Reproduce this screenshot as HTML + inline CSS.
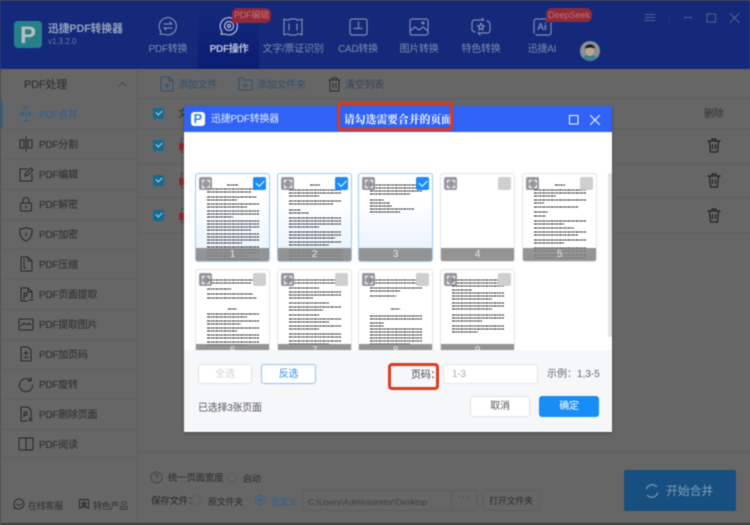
<!DOCTYPE html>
<html lang="zh"><head><meta charset="utf-8"><title>迅捷PDF转换器</title>
<style>
html,body{margin:0;padding:0}
body{width:750px;height:525px;overflow:hidden;background:#666;position:relative;font-family:"Liberation Sans","Noto Sans CJK SC",sans-serif;font-size:10px;color:#2c2c2c;letter-spacing:-.25px}
div,span,svg{position:absolute;box-sizing:border-box;white-space:nowrap}
#w{left:0;top:0;width:750px;height:525px;filter:blur(.45px);overflow:hidden;background:#666}
svg{fill:none;stroke-linecap:round;stroke-linejoin:round}
.tab{top:42px;width:70px;text-align:center;color:#7d8ab0;font-size:10px;line-height:14px;margin-top:.5px}
.ti{stroke:#7d8ab0;stroke-width:1.2}
.side{left:39px;line-height:14px;color:#2b2b2b;margin-top:1.5px}
.si{left:18px;width:16px;height:16px;stroke:#262626;stroke-width:1}
.ln{background:#5f5f5f;height:1px}
.tool{top:77px;line-height:14px;color:#33506e;margin-top:1.5px}
.cb{left:153px;width:11px;height:11px;background:#156c92;border-radius:2px}
.cb:after{content:"";position:absolute;left:3px;top:2px;width:5px;height:3px;border-left:1.2px solid #c5d5dd;border-bottom:1.2px solid #c5d5dd;transform:rotate(-45deg)}
.thumb{width:75px;height:89px;background:#fff;border:1px solid #e4e4e4;border-radius:3px;overflow:hidden}
.sel{border-color:#9cc9f2;background:linear-gradient(#fff 30%,#e6f1ff)}
.bar{left:0;right:0;bottom:0;height:13px;background:rgba(133,133,133,.88);color:#e8e8e8;text-align:center;font-size:10px;line-height:13px}
.ex{left:3px;top:3px;width:13px;height:13px;background:rgba(125,128,135,.8);border-radius:2px}
.ex:after{content:"";position:absolute;left:2.500px;top:2.500px;width:8px;height:8px;background:linear-gradient(#fff,#fff) 0 0/3px 1px no-repeat,linear-gradient(#fff,#fff) 0 0/1px 3px no-repeat,linear-gradient(#fff,#fff) 100% 0/3px 1px no-repeat,linear-gradient(#fff,#fff) 100% 0/1px 3px no-repeat,linear-gradient(#fff,#fff) 0 100%/3px 1px no-repeat,linear-gradient(#fff,#fff) 0 100%/1px 3px no-repeat,linear-gradient(#fff,#fff) 100% 100%/3px 1px no-repeat,linear-gradient(#fff,#fff) 100% 100%/1px 3px no-repeat}
.ck{right:3px;top:3px;width:13px;height:13px;border-radius:2px;background:#cfcfcf}
.on{background:#1a8cf5}
.on:after{content:"";position:absolute;left:3px;top:3px;width:7px;height:3.5px;border-left:1.5px solid #fff;border-bottom:1.5px solid #fff;transform:rotate(-45deg)}
.tx{stroke:#222;stroke-width:.95;stroke-dasharray:3 .6 1.5 .5 2 .7;stroke-linecap:butt;left:0;top:0;width:73px;height:87px}
.btn{border-radius:3px;text-align:center;font-size:10px;background:#fff}
.pdf{left:181px;width:4px;height:15px;border:1px solid #4c4c4c;border-right:0}
.rd{left:179px;width:5px;height:7px;background:#8c2a2a}
</style></head><body><div id="w">

<!-- Header -->
<div style="left:0;top:0;width:750px;height:69px;background:#14297a;border-top:1px solid #303a58"></div>
<div style="left:198px;top:7px;width:61px;height:62px;background:linear-gradient(#14297a,#0a1c74)"></div>
<div style="left:14px;top:21px;width:28px;height:27px;background:#26808a;border-radius:4px"></div>
<div style="left:20px;top:25px;font:bold 24px/22px 'Liberation Sans',sans-serif;color:#b4c0c2">P</div>
<div style="left:48px;top:22px;font-weight:bold;font-size:10.800px;line-height:15px;color:#98a2bf;letter-spacing:-.1px">迅捷PDF转换器</div>
<div style="left:48px;top:37px;font-size:8px;line-height:10px;color:#6e7ca6;letter-spacing:0">v1.3.2.0</div>

<svg class="ti" style="left:158px;top:16px;width:20px;height:20px" viewBox="0 0 20 20"><path d="M2 18c1-1 1-2 .6-3A8.600 8.600 0 1 1 6 18c-1 .4-2.500.4-4 0zM6 8h8l-2-2M14 12H6l2 2"/></svg>
<svg class="ti" style="left:219px;top:16px;width:20px;height:20px;stroke:#b4bcd6" viewBox="0 0 20 20"><path d="M2 18c1-1 1-2 .6-3A8.600 8.600 0 1 1 6 18c-1 .4-2.500.4-4 0z"/><circle cx="10" cy="10" r="4.500"/><circle cx="10" cy="10" r="1.500"/></svg>
<svg class="ti" style="left:283px;top:18px;width:20px;height:18px" viewBox="0 0 20 18"><path d="M1 1c3 1.500 5 1.500 6 0h6c1 1.500 3 1.500 6 0v16c-3-1.500-5-1.500-6 0H7c-1-1.500-3-1.500-6 0zM6 6v6M14 6v6"/></svg>
<svg class="ti" style="left:349px;top:18px;width:19px;height:18px" viewBox="0 0 19 18"><rect x="1" y="1" width="17" height="16" rx="2"/><path d="M9.500 4v6.500M5 10.500h8"/></svg>
<svg class="ti" style="left:409px;top:18px;width:20px;height:18px" viewBox="0 0 20 18"><rect x="1" y="1" width="18" height="16" rx="2"/><path d="M1 13l5-4 4 3 4-3 5 4"/><circle cx="14" cy="5" r="1"/></svg>
<svg class="ti" style="left:471px;top:17px;width:20px;height:19px" viewBox="0 0 20 19"><path d="M4 15c-2-.4-3-1.500-3-3V6c0-2 1-3 3-3h9l-2-2M16 4c2 .4 3 1.500 3 3v6c0 2-1 3-3 3H7l2 2M10 6l1 2.500 2.500.3-2 1.600.6 2.600-2.100-1.400-2.100 1.400.6-2.600-2-1.600 2.500-.3z"/></svg>
<svg class="ti" style="left:533px;top:18px;width:19px;height:18px" viewBox="0 0 19 18"><path d="M1 15V3c0-1 1-2 2-2h13M18 5v10c0 1-1 2-2 2H3"/></svg>
<div style="left:537px;top:22px;font-weight:bold;font-size:10px;line-height:12px;color:#7d8ab0">Ai</div>

<div class="tab" style="left:133px">PDF转换</div>
<div class="tab" style="left:194px;color:#bcc3da;font-weight:bold">PDF操作</div>
<div class="tab" style="left:258px">文字/票证识别</div>
<div class="tab" style="left:323px">CAD转换</div>
<div class="tab" style="left:384px">图片转换</div>
<div class="tab" style="left:446px">特色转换</div>
<div class="tab" style="left:507px">迅捷AI</div>

<div style="left:232px;top:8px;width:39px;height:15px;background:#8f2a38;border-radius:6px 6px 6px 0;color:#c4707a;font-size:9px;line-height:15px;text-align:center">PDF编辑</div>
<div style="left:546px;top:8px;width:46px;height:14px;background:#8f2a38;border-radius:6px 6px 6px 0;color:#c4707a;font-size:9px;line-height:14px;text-align:center;letter-spacing:0">DeepSeek</div>

<svg style="left:580px;top:41px;width:20px;height:20px" viewBox="0 0 20 20"><circle cx="10" cy="10" r="10" fill="#8a8f92"/><path d="M3 17c2-3 4-3.500 7-3.500s5 .5 7 3.500a10 10 0 0 1-14 0z" fill="#3f7f96" stroke="none"/><ellipse cx="10" cy="9.500" rx="4.500" ry="5.500" fill="#b8a690" stroke="none"/><path d="M5 8c0-6 10-6 10 0-2-2-8-2-10 0z" fill="#15181c" stroke="none"/></svg>

<svg style="left:644px;top:13px;width:96px;height:10px;stroke:#54648f;stroke-width:1" viewBox="0 0 96 10"><path d="M1 1.500h10M1 4.500h10M1 7.500h10"/><path d="M25 1v8" stroke="#22347f"/><path d="M40 4.500h8" /><rect x="63" y="1" width="8.500" height="8"/><path d="M86 .5l9 9M95 .5l-9 9"/></svg>

<!-- Main backgrounds -->
<div style="left:137px;top:69px;width:1px;height:456px;background:#5e5e5e"></div>
<div class="ln" style="left:138px;top:98px;width:612px"></div>
<div class="ln" style="left:138px;top:128px;width:612px"></div>
<div class="ln" style="left:138px;top:163px;width:612px"></div>
<div class="ln" style="left:138px;top:197px;width:612px"></div>
<div class="ln" style="left:138px;top:232px;width:612px"></div>
<div class="ln" style="left:138px;top:452px;width:612px"></div>
<div style="left:0;top:523px;width:750px;height:2px;background:#3a3a3a"></div>
<div style="left:0;top:69px;width:1px;height:456px;background:#4a4a4a"></div>

<!-- Sidebar -->
<div class="side" style="left:24px;top:76px;font-size:11px;letter-spacing:-.2px">PDF处理</div>
<svg style="left:118px;top:81px;width:9px;height:6px;stroke:#484848;stroke-width:1" viewBox="0 0 9 6"><path d="M1 5l3.500-3.500L8 5"/></svg>
<div style="left:1px;top:100px;width:2px;height:28px;background:#2f6290"></div>

<div class="ln" style="left:3px;top:129px;width:134px"></div><div class="ln" style="left:3px;top:159px;width:134px"></div><div class="ln" style="left:3px;top:189px;width:134px"></div><div class="ln" style="left:3px;top:219px;width:134px"></div><div class="ln" style="left:3px;top:249px;width:134px"></div><div class="ln" style="left:3px;top:279px;width:134px"></div><div class="ln" style="left:3px;top:309px;width:134px"></div><div class="ln" style="left:3px;top:339px;width:134px"></div><div class="ln" style="left:3px;top:369px;width:134px"></div><div class="ln" style="left:3px;top:399px;width:134px"></div><div class="ln" style="left:3px;top:429px;width:134px"></div><div class="ln" style="left:3px;top:457px;width:134px"></div>

<div class="side" style="top:107px;color:#2f5f8e">PDF合并</div>
<div class="side" style="top:137px">PDF分割</div>
<div class="side" style="top:167px">PDF编辑</div>
<div class="side" style="top:197px">PDF解密</div>
<div class="side" style="top:227px">PDF加密</div>
<div class="side" style="top:257px">PDF压缩</div>
<div class="side" style="top:287px">PDF页面提取</div>
<div class="side" style="top:317px">PDF提取图片</div>
<div class="side" style="top:347px">PDF加页码</div>
<div class="side" style="top:377px">PDF旋转</div>
<div class="side" style="top:407px">PDF删除页面</div>
<div class="side" style="top:437px">PDF阅读</div>

<svg class="si" style="top:106px;stroke:#2f5f8e" viewBox="0 0 16 16"><path d="M5 1h6M5 15h6M8 1v14M1 8h5M15 8h-5M4 6l2 2-2 2M12 6l-2 2 2 2"/></svg>
<svg class="si" style="top:136px" viewBox="0 0 16 16"><rect x="2" y="4" width="4" height="8"/><rect x="10" y="4" width="4" height="8"/><path d="M8 1v14"/></svg>
<svg class="si" style="top:166px" viewBox="0 0 16 16"><path d="M9 3H2v12h12V8M7 10l.5-2.500L13 2l2 2-5.500 5.500z"/></svg>
<svg class="si" style="top:196px" viewBox="0 0 16 16"><rect x="2.500" y="7" width="11" height="8" rx="1.500"/><path d="M5 7V4.500a3 3 0 0 1 6 0V7M8 10v2"/></svg>
<svg class="si" style="top:226px" viewBox="0 0 16 16"><path d="M2 3c3 0 4-1 6-1.500C10 2 11 3 14 3c.5 6-1 10-6 12C3 13 1.500 9 2 3zM8 7v3"/></svg>
<svg class="si" style="top:256px" viewBox="0 0 16 16"><path d="M3 1h7l4 4v10H3zM10 1v4h4M6 3v2M6 6v2M6 9v2M6 12h2"/></svg>
<svg class="si" style="top:286px" viewBox="0 0 16 16"><path d="M9 15H3V2h7l4 4v6M10 2v4h4M6 7h3v3H6zM6 7v6M11 14h4"/></svg>
<svg class="si" style="top:316px" viewBox="0 0 16 16"><rect x="1" y="3" width="14" height="11" rx="1"/><path d="M3 10l3-3 3 2 2-2 2 2"/></svg>
<svg class="si" style="top:346px" viewBox="0 0 16 16"><path d="M3 1h7l3 3v11H3zM8 5v4M6 7h4M6 11.500h4"/></svg>
<svg class="si" style="top:376px" viewBox="0 0 16 16"><path d="M13 5a6.500 6.500 0 1 0 1.500 4M13 1.500V5H9.500"/></svg>
<svg class="si" style="top:406px" viewBox="0 0 16 16"><path d="M9 15H3V1h7l3 3v7M6 6h3v3H6zM6 6v5M11 12l3 3M14 12l-3 3"/></svg>
<svg class="si" style="top:436px" viewBox="0 0 16 16"><path d="M1 2h6c.6 0 1 .4 1 1v11H2c-.6 0-1-.4-1-1zM15 2H9c-.6 0-1 .4-1 1v11h6c.6 0 1-.4 1-1z"/></svg>

<svg class="si" style="left:13px;top:498px;width:12px;height:12px;stroke-width:1.300" viewBox="0 0 16 16"><path d="M8 1.500a6.500 6.500 0 1 1-4 11.600L1.500 14l.8-2.500A6.500 6.500 0 0 1 8 1.500zM5 8c1 2.500 5 2.500 6 0"/></svg>
<div class="side" style="left:28px;top:497px;font-size:9px;color:#303030">在线客服</div>
<svg class="si" style="left:78px;top:498px;width:12px;height:12px;stroke-width:1.300" viewBox="0 0 16 16"><path d="M2 2h12v12l-3-2H5l-3 2zM8 5l1 2h2l-1.500 1.500.5 2-2-1-2 1 .5-2L5 7h2z"/></svg>
<div class="side" style="left:93px;top:497px;font-size:9px;color:#303030">特色产品</div>

<!-- Toolbar -->
<svg style="left:160px;top:76px;width:14px;height:16px;stroke:#33506e;stroke-width:1" viewBox="0 0 14 16"><path d="M1 1h8l4 4v10H1zM9 1v4h4M7 7v5M4.500 9.500h5"/></svg>
<div class="tool" style="left:178px">添加文件</div>
<svg style="left:238px;top:77px;width:15px;height:14px;stroke:#33506e;stroke-width:1" viewBox="0 0 15 14"><path d="M1 1h4l1 2h8v10H1zM7.500 6v5M5 8.500h5"/></svg>
<div class="tool" style="left:257px">添加文件夹</div>
<svg style="left:328px;top:77px;width:13px;height:15px;stroke:#2a2a2a;stroke-width:1" viewBox="0 0 13 15"><path d="M1 3h11M4 3V1h5v2M2 3v11h9V3M5 6v5M8 6v5"/></svg>
<div class="tool" style="left:345px;color:#30445a">清空列表</div>

<!-- Table -->
<div class="cb" style="top:108px"></div><div class="cb" style="top:140px"></div><div class="cb" style="top:175px"></div><div class="cb" style="top:210px"></div>
<div style="left:178px;top:108px;line-height:14px">文</div>
<div class="pdf" style="top:138px"></div><div class="rd" style="top:143px"></div>
<div class="pdf" style="top:173px"></div><div class="rd" style="top:178px"></div>
<div class="pdf" style="top:208px"></div><div class="rd" style="top:213px"></div>
<div style="left:704px;top:108px;line-height:14px;color:#333">删除</div>
<svg style="left:707px;top:138px;width:14px;height:15px;stroke:#222;stroke-width:1.200" viewBox="0 0 14 15"><path d="M1 3h12M5 3V1h4v2M2.500 3l1 11h7l1-11M5.500 6.500v4M8.500 6.500v4"/></svg>
<svg style="left:707px;top:173px;width:14px;height:15px;stroke:#222;stroke-width:1.200" viewBox="0 0 14 15"><path d="M1 3h12M5 3V1h4v2M2.500 3l1 11h7l1-11M5.500 6.500v4M8.500 6.500v4"/></svg>
<svg style="left:707px;top:208px;width:14px;height:15px;stroke:#222;stroke-width:1.200" viewBox="0 0 14 15"><path d="M1 3h12M5 3V1h4v2M2.500 3l1 11h7l1-11M5.500 6.500v4M8.500 6.500v4"/></svg>

<!-- Bottom -->
<svg style="left:150px;top:471px;width:13px;height:13px;stroke:#444;stroke-width:.9" viewBox="0 0 13 13"><circle cx="6.500" cy="6.500" r="5.500"/><path d="M5 5c0-2 3-2 3 0 0 1-1.500 1-1.500 2.500M6.500 9.500v.3"/></svg>
<div style="left:168px;top:472px;line-height:14px;font-size:9.500px;color:#2c2c2c">统一页面宽度</div>
<div style="left:227px;top:473px;width:10px;height:10px;border:1px solid #5c5c5c;border-radius:50%"></div>
<div style="left:243px;top:472px;line-height:14px;font-size:9px;color:#2c2c2c">启动</div>
<div style="left:151px;top:494.500px;line-height:14px;font-size:9.500px;color:#262626">保存文件&#xFF1A;</div>
<div style="left:191px;top:495px;width:10px;height:10px;border:1px solid #5c5c5c;border-radius:50%"></div>
<div style="left:208px;top:494.500px;line-height:14px;font-size:9px;color:#2c2c2c">原文件夹</div>
<div style="left:255px;top:495px;width:10px;height:10px;border:1px solid #2f6290;border-radius:50%"></div>
<div style="left:258px;top:498px;width:4px;height:4px;background:#2f6290;border-radius:50%"></div>
<div style="left:271px;top:494.500px;line-height:14px;font-size:9px;color:#2f5f8e">自定义</div>
<div style="left:302px;top:490px;width:176px;height:21px;border:1px solid #5f5f5f;border-radius:2px"></div>
<div style="left:451px;top:490px;width:1px;height:21px;background:#5a5a5a"></div>
<div style="left:308px;top:494.500px;line-height:14px;font-size:8.500px;color:#3f3f3f;letter-spacing:0">C:\Users\Administrator\Desktop</div>
<div style="left:458px;top:491px;line-height:14px;color:#3c3c3c;letter-spacing:.6px">···</div>
<div style="left:482px;top:490px;width:58px;height:21px;border:1px solid #5f5f5f;border-radius:3px;text-align:center;line-height:20px;font-size:9px;color:#2c2c2c">打开文件夹</div>
<div style="left:624px;top:470px;width:112px;height:41px;background:#174f80;border-radius:2px"></div>
<svg style="left:645px;top:484px;width:14px;height:14px;stroke:#7f9db8;stroke-width:1.200" viewBox="0 0 14 14"><path d="M11.500 2.500A6 6 0 0 0 1.500 5M2.500 11.500A6 6 0 0 0 12.500 9"/></svg>
<div style="left:666px;top:482px;font-size:12px;line-height:18px;color:#7f9db8">开始合并</div>

<!-- Dialog -->
<div style="left:184px;top:106px;width:428px;height:326px;background:#fff;box-shadow:0 1px 3px rgba(0,0,0,.3);overflow:hidden">
  <div style="left:0;top:0;width:428px;height:26px;background:#2f62f5"></div>
  <div style="left:7px;top:6px;width:14px;height:14px;background:#fff;border-radius:3px"></div>
  <div style="left:9.500px;top:6px;font:bold 13px/14px 'Liberation Sans',sans-serif;color:#2f8fe0">P</div>
  <div style="left:27px;top:7px;line-height:14px;color:#e4ecff;font-size:10px">迅捷PDF转换器</div>
  <div style="left:160px;top:6px;font-family:'Liberation Serif','Noto Serif CJK SC',serif;font-weight:bold;font-size:10.800px;line-height:16px;color:#fff;letter-spacing:0">请勾选需要合并的页面</div>
  <svg style="left:385px;top:9px;width:32px;height:10px;stroke:#fff;stroke-width:1" viewBox="0 0 32 10"><rect x=".5" y=".5" width="8.500" height="8.500"/><path d="M21.500.5l9 9M30.500.5l-9 9"/></svg>
  <div style="left:424px;top:67px;width:4px;height:164px;background:#e2e2e2;border-radius:2px"></div>

  <div class="thumb sel" style="left:11px;top:67px">
    <svg class="tx" viewBox="0 0 73 87"><path d="M31 11h11M11 15h52M11 18h44M11 23h50M11 26h30M11 30h52M11 33h40M11 37h52M11 40h52M11 43h26M11 47h52M11 50h52M11 53h52M11 56h44M11 60h52M11 63h52M11 66h52M11 69h35M11 73h52M11 76h52M11 79h52M11 82h40M11 85h52"/></svg>
    <div class="ex"></div><div class="ck on"></div><div class="bar">1</div></div>
  <div class="thumb sel" style="left:93px;top:67px">
    <svg class="tx" viewBox="0 0 73 87"><path d="M32 11h10M11 16h52M11 19h52M11 22h30M11 27h52M11 30h44M11 36h12M11 39h20M11 44h52M11 47h52M11 50h52M11 53h30M11 58h52M11 61h52M11 64h46M11 68h52M11 71h40M11 76h52M11 79h52M11 82h52M11 85h52"/></svg>
    <div class="ex"></div><div class="ck on"></div><div class="bar">2</div></div>
  <div class="thumb sel" style="left:174px;top:67px">
    <svg class="tx" viewBox="0 0 73 87"><path d="M11 11h52M11 14h52M11 17h52M11 20h40M11 26h14M11 29h20M11 32h22M11 35h44M11 38h30"/></svg>
    <div class="ex"></div><div class="ck on"></div><div class="bar">3</div></div>
  <div class="thumb" style="left:256px;top:67px"><div class="ex"></div><div class="ck"></div><div class="bar">4</div></div>
  <div class="thumb" style="left:338px;top:67px">
    <svg class="tx" viewBox="0 0 73 87"><path d="M32 11h10M11 16h52M11 19h52M11 22h22M11 26h52M11 29h10M11 33h44M11 38h14M11 42h12M11 47h52M11 50h30M11 54h40M11 58h52M11 61h44M11 66h52M11 69h30M11 74h52M11 77h52M11 81h52M11 84h52"/></svg>
    <div class="ex"></div><div class="ck"></div><div class="bar">5</div></div>

  <div class="thumb" style="left:11px;top:163px">
    <svg class="tx" viewBox="0 0 73 87"><path d="M11 10h50M11 13h44M11 19h24M11 24h46M11 28h50"/><path d="M32 39h9M11 44h52M11 47h40M11 51h52M11 54h34M11 58h52M11 61h30M11 65h52M11 68h52M11 72h52M11 75h40"/></svg>
    <div class="ex"></div><div class="ck"></div><div class="bar" style="top:74px">6</div></div>
  <div class="thumb" style="left:93px;top:163px">
    <svg class="tx" viewBox="0 0 73 87"><path d="M11 10h52M11 13h46M11 18h30M11 22h52M11 25h52M11 28h24M11 33h40M11 37h52M11 40h34M11 45h30M11 49h52M11 52h40M11 56h52M11 59h30M11 64h52M11 67h52M11 71h52M11 74h40"/></svg>
    <div class="ex"></div><div class="ck"></div><div class="bar" style="top:74px">7</div></div>
  <div class="thumb" style="left:174px;top:163px">
    <svg class="tx" viewBox="0 0 73 87"><path d="M11 10h52M11 13h50M11 18h52M11 21h30M11 26h26M32 39h9M11 46h52M11 49h52M11 53h14M11 56h14M11 59h52M11 62h52M11 65h52M11 68h52M11 71h52M11 74h40"/></svg>
    <div class="ex"></div><div class="ck"></div><div class="bar" style="top:74px">8</div></div>
  <div class="thumb" style="left:256px;top:163px">
    <svg class="tx" viewBox="0 0 73 87"><path d="M11 10h52M11 13h50M11 16h52M11 20h20M11 23h52M11 26h52M11 29h40M11 33h52M11 36h52M11 39h40M11 45h52M11 48h52M11 51h30M11 56h52M11 59h52M11 62h26"/></svg>
    <div class="ex"></div><div class="ck"></div><div class="bar" style="top:74px">9</div></div>

  <!-- Dialog footer -->
  <div style="left:0;top:244px;width:428px;height:82px;background:#f6f7f9"></div>
  <div class="btn" style="left:14px;top:258px;width:54px;height:20px;border:1px solid #e2e2e2;color:#d0d0d0;line-height:20px">全选</div>
  <div class="btn" style="left:77px;top:258px;width:55px;height:20px;border:1px solid #8cc3f0;color:#2f90e6;line-height:20px">反选</div>
  <div style="left:227px;top:263px;line-height:14px;color:#444;font-size:10px">页码&#xFF1A;</div>
  <div style="left:259px;top:258px;width:95px;height:20px;background:#fff;border:1px solid #e4e4e4;border-radius:2px;color:#aaa;line-height:19px;padding-left:8px">1-3</div>
  <div style="left:363px;top:262px;line-height:14px;color:#666;letter-spacing:0">示例&#xFF1A;1,3-5</div>
  <div style="left:14px;top:296px;line-height:14px;color:#555">已选择3张页面</div>
  <div class="btn" style="left:286px;top:290px;width:60px;height:21px;border:1px solid #e2e2e2;color:#555;line-height:20px">取消</div>
  <div class="btn" style="left:355px;top:290px;width:60px;height:21px;background:#1a8cf5;color:#fff;line-height:22px">确定</div>
</div>

<!-- Red annotations -->
<div style="left:337px;top:102px;width:116px;height:29px;border:3px solid #dd3a1f;border-radius:4px"></div>
<div style="left:388px;top:363px;width:51px;height:27px;border:3px solid #dd3a1f;border-radius:4px"></div>
</div></body></html>
